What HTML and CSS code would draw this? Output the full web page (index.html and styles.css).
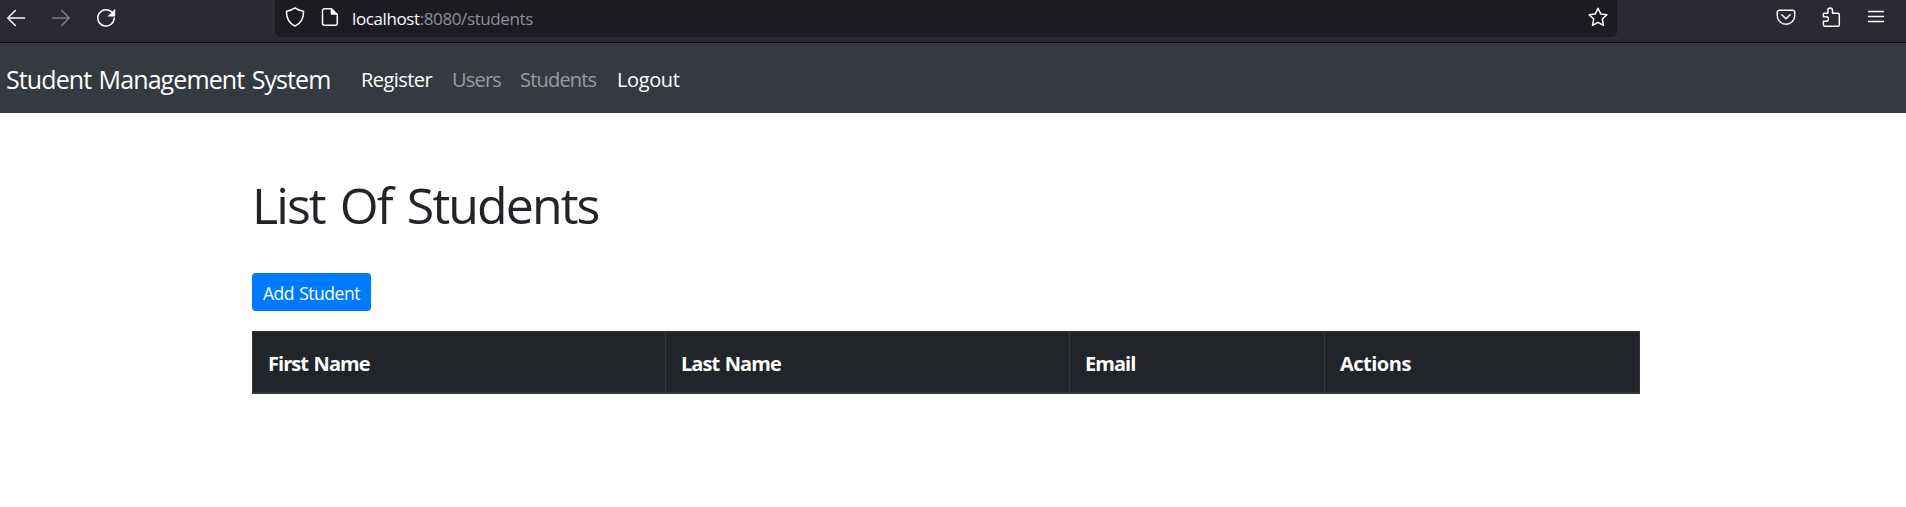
FILE: index.html
```html
<!DOCTYPE html>
<html lang="en">
<head>
<meta charset="utf-8">
<title>Students</title>
<link rel="stylesheet" href="styles.css">
</head>
<body>
<div class="toolbar">
  <div class="nav-buttons">
    <svg class="icon" viewBox="0 0 20 20"><path d="M18.500 10H2M9.300 2.500L1.800 10l7.500 7.500"/></svg>
    <svg class="icon dim" viewBox="0 0 20 20"><path d="M1.500 10H18M10.700 2.500l7.500 7.500-7.500 7.500"/></svg>
    <svg class="icon" viewBox="0 0 20 20"><path d="M16.200 4.500A8.200 8.200 0 1 0 18.200 10"/><path class="solid" d="M18.900 1.500v6.700h-6.700z"/></svg>
  </div>
  <div class="address">
    <svg class="icon" viewBox="0 0 20 20"><path d="M10 .9C7.500 2.800 4.500 3.900 1.500 4.200c-.2 6.800 1.800 11.600 8.500 14.900 6.700-3.300 8.700-8.100 8.500-14.900C15.500 3.900 12.500 2.800 10 .9z"/></svg>
    <svg class="icon page-icon" viewBox="0 0 20 20"><path d="M4.500 1.700h7l5.800 5.800v8.800a2 2 0 0 1-2 2H4.500a2 2 0 0 1-2-2V3.700a2 2 0 0 1 2-2z"/><path class="solid" d="M11 1.500v6h6z"/></svg>
    <span class="url"><span class="host">localhost</span>:8080/students</span>
    <svg class="icon star" viewBox="0 0 20 20"><path d="M10 1.200l2.700 5.700 6.200.8-4.600 4.300 1.200 6.300-5.500-3-5.500 3 1.200-6.300-4.600-4.300 6.200-.8z"/></svg>
  </div>
  <div class="actions">
    <svg class="icon" viewBox="0 0 20 20"><path d="M3.300 3.200h13.400a2 2 0 0 1 2 2V9a8.700 8.200 0 0 1-17.400 0V5.200a2 2 0 0 1 2-2z"/><path d="M5.800 7.800L10 11.800l4.200-4"/></svg>
    <svg class="icon" viewBox="0 0 20 20"><path d="M3.200 6.200h3.700V3.300a2.300 2.300 0 0 1 4.600 0v2.900h5.300a1.500 1.500 0 0 1 1.500 1.500v10a1.500 1.500 0 0 1-1.500 1.500H3.900a1.500 1.500 0 0 1-1.500-1.500v-3.500h2.800a2.200 2.200 0 0 0 0-4.400H2.400V7a.8.8 0 0 1 .8-.8z"/></svg>
    <svg class="icon" viewBox="0 0 20 20"><path d="M2.500 4.500h15M2.500 9.500h15M2.500 14.500h15"/></svg>
  </div>
</div>
<nav class="navbar">
  <a class="brand">Student Management System</a>
  <a class="link l1">Register</a>
  <a class="link l2 muted">Users</a>
  <a class="link l3 muted">Students</a>
  <a class="link l4">Logout</a>
</nav>
<main class="container">
  <h1 class="title">List Of Students</h1>
  <a class="btn">Add Student</a>
  <table class="table">
    <colgroup><col class="c1"><col class="c2"><col class="c3"><col class="c4"></colgroup>
    <thead><tr><th>First Name</th><th>Last Name</th><th>Email</th><th>Actions</th></tr></thead>
  </table>
</main>
</body>
</html>
```
FILE: styles.css
```css
* { box-sizing: border-box; }
body {
  margin: 0;
  background: #fff;
  color: #212529;
  font-family: "Open Sans", "Noto Sans", sans-serif;
  font-size: 20px;
}
.toolbar {
  display: flex;
  height: 43px;
  background: #2b2a33;
  border-bottom: 1px solid #0c0c0d;
}
.icon {
  width: 20px;
  height: 20px;
  flex: none;
  fill: none;
  stroke: #fbfbfe;
  stroke-width: 1.5;
  stroke-linecap: round;
  stroke-linejoin: round;
}
.solid { fill: #fbfbfe; stroke-width: .5; }
.dim { opacity: .4; }
.nav-buttons {
  display: flex;
  gap: 25px;
  width: 275px;
  padding: 8px 0 0 6px;
}
.address {
  display: flex;
  width: 1342px;
  height: 37px;
  padding: 7px 9px 0 10px;
  background: #1c1b22;
  border-radius: 0 0 5px 5px;
}
.page-icon { margin-left: 15px; }
.url {
  margin-left: 12px;
  color: #8f8f94;
  font-size: 17px;
  line-height: 24px;
  letter-spacing: -.39px;
}
.host { color: #fbfbfe; }
.star { margin-left: auto; }
.actions {
  display: flex;
  gap: 25px;
  margin-left: auto;
  padding: 7px 20px 0 0;
}
.navbar {
  display: flex;
  align-items: center;
  height: 70px;
  padding: 2px 0 0 6px;
  background: #343a40;
  color: #fff;
}
.brand { width: 355px; font-size: 25px; letter-spacing: -.9px; word-spacing: 1.8px; }
.link { white-space: nowrap; letter-spacing: -.55px; }
.l1 { width: 91px; }
.l2 { width: 68px; letter-spacing: -.8px; }
.l3 { width: 97px; letter-spacing: -.8px; }
.l4 { letter-spacing: -.4px; }
.muted { color: #999c9f; }
.container { width: 1388px; margin-left: 252px; padding-top: 62px; }
.title {
  margin: 0 0 37px;
  font-size: 50px;
  font-weight: 400;
  line-height: 61px;
  letter-spacing: -1.9px;
  word-spacing: 4px;
}
.btn {
  display: flex;
  align-items: center;
  justify-content: center;
  width: 119px;
  height: 38px;
  padding-top: 2px;
  border-radius: 4px;
  background: #007bff;
  color: #fff;
  font-size: 17.5px;
  letter-spacing: -.45px;
  word-spacing: 1px;
  white-space: nowrap;
}
.table {
  width: 1388px;
  height: 63px;
  margin-top: 20px;
  table-layout: fixed;
  border-spacing: 0;
  background: #212529;
  border: 1px solid #32383e;
  border-bottom-width: 2px;
  color: #fff;
}
th {
  padding: 2px 15px 0;
  text-align: left;
  letter-spacing: -.95px;
  word-spacing: 1.3px;
  border-right: 1px solid #32383e;
}
th:last-child { border-right: 0; letter-spacing: -.5px; }
.c1 { width: 413px; }
.c2 { width: 404px; }
.c3 { width: 255px; }
```
